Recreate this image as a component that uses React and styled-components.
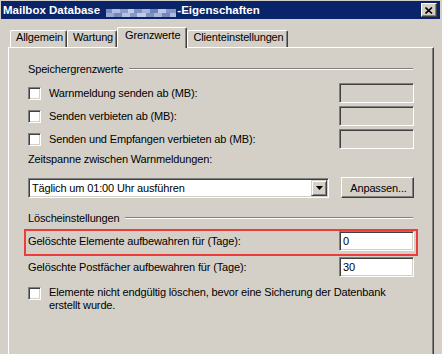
import React from "react";
import styled, { createGlobalStyle } from "styled-components";

const Global = createGlobalStyle`
  * { box-sizing: border-box; }
  html, body { margin: 0; padding: 0; background: #d4d0c8; }
  body {
    font-family: "Liberation Sans", Arial, sans-serif;
    font-size: 11px;
    letter-spacing: -0.15px;
    color: #000;
  }
`;

const Window = styled.div`
  width: 442px;
  height: 354px;
  overflow: hidden;
  background: #d4d0c8;
  padding-top: 1px;
  display: flex;
  flex-direction: column;
`;

const TitleBar = styled.div`
  height: 18px;
  margin: 0 2px 0 1px;
  padding: 0 3px 0 2px;
  background: #0a246a;
  display: flex;
  align-items: center;
  color: #fff;
  font-weight: bold;
  font-size: 11.5px;
  letter-spacing: 0;
  white-space: pre;
  flex-shrink: 0;
`;

const Blur = styled.span`
  align-self: flex-end;
  margin: 0 1px 2px 3px;
  width: 70px;
  height: 8px;
  background:
    linear-gradient(90deg, #7a8cc0 0 9%, #b2bcdc 9% 20%, #8e9ccb 20% 31%, #c3cbe4 31% 40%, #7f90c2 40% 52%, #a7b3d8 52% 63%, #6f83bb 63% 74%, #bdc6e2 74% 86%, #8394c5 86% 100%) top / 100% 50% no-repeat,
    linear-gradient(90deg, #9aa8d2 0 11%, #7587bd 11% 23%, #b7c1df 23% 34%, #8899c9 34% 45%, #c1c9e3 45% 57%, #7e8fc2 57% 69%, #a9b5d9 69% 80%, #7688be 80% 91%, #b0bbdc 91% 100%) bottom / 100% 50% no-repeat;
`;

const CloseButton = styled.div`
  margin-left: auto;
  width: 16px;
  height: 14px;
  background: #d4d0c8;
  border: 1px solid;
  border-color: #fff #404040 #404040 #fff;
  box-shadow: inset -1px -1px #808080;
  display: flex;
  align-items: center;
  justify-content: center;
`;

const TabStrip = styled.div`
  margin-top: 8px;
  height: 20px;
  padding-left: 10px;
  display: flex;
  align-items: flex-end;
  flex-shrink: 0;
  position: relative;
  z-index: 1;
`;

const Tab = styled.div`
  height: ${(p) => (p.$active ? "21px" : "17px")};
  margin-bottom: ${(p) => (p.$active ? "-1px" : "0")};
  padding: ${(p) => (p.$active ? "1px 6px 0 7px" : "0 3px 0 5px")};
  line-height: 13px;
  background: #d4d0c8;
  border-top: 1px solid #fff;
  border-left: 1px solid #fff;
  border-right: 1px solid #404040;
  border-radius: 2px 2px 0 0;
  box-shadow: inset -1px 0 #808080;
  white-space: nowrap;
`;

const Panel = styled.div`
  flex-shrink: 0;
  height: 330px;
  margin: 0 8px;
  padding: 15px 19px 0 19px;
  border-top: 1px solid #fff;
  border-left: 1px solid #fff;
  border-right: 1px solid #404040;
  box-shadow: inset -1px 0 #808080;
  display: flex;
  flex-direction: column;
`;

const GroupHeader = styled.div`
  margin-top: ${(p) => p.$mt || 0}px;
  height: 13px;
  line-height: 13px;
  display: flex;
  align-items: flex-start;
  white-space: nowrap;
`;

const EtchedLine = styled.div`
  flex: 1;
  margin: 5px 1px 0 6px;
  height: 2px;
  border-top: 1px solid #808080;
  border-bottom: 1px solid #fff;
`;

const RowList = styled.div`
  margin-top: ${(p) => p.$mt || 0}px;
  display: flex;
  flex-direction: column;
  gap: 3px;
`;

const FieldRow = styled.div`
  margin-top: ${(p) => p.$mt || 0}px;
  height: 20px;
  display: flex;
  align-items: center;
  line-height: 13px;
  white-space: nowrap;
`;

const Checkbox = styled.span`
  flex-shrink: 0;
  width: 13px;
  height: 13px;
  margin: ${(p) => (p.$top ? "1px 8px 0 0" : "0 8px 0 0")};
  background: #fff;
  border: 1px solid;
  border-color: #808080 #fff #fff #808080;
  box-shadow: inset 1px 1px #404040, inset -1px -1px #d4d0c8;
`;

const TextBox = styled.div`
  margin-left: auto;
  width: 75px;
  height: 20px;
  padding: 2px 0 0 3px;
  line-height: 14px;
  background: ${(p) => (p.$disabled ? "#d4d0c8" : "#fff")};
  border: 1px solid;
  border-color: #808080 #fff #fff #808080;
  box-shadow: inset 1px 1px #404040, inset -1px -1px #d4d0c8;
`;

const Label = styled.div`
  margin-top: ${(p) => p.$mt || 0}px;
  height: 13px;
  line-height: 13px;
`;

const ScheduleRow = styled.div`
  margin-top: ${(p) => p.$mt || 0}px;
  display: flex;
  align-items: flex-end;
`;

const Select = styled.div`
  width: 301px;
  height: 20px;
  background: #fff;
  border: 1px solid;
  border-color: #808080 #fff #fff #808080;
  box-shadow: inset 1px 1px #404040, inset -1px -1px #d4d0c8;
  padding: 1px 1px 1px 3px;
  display: flex;
  align-items: center;
`;

const SelectText = styled.span`
  flex: 1;
  line-height: 14px;
`;

const ArrowButton = styled.div`
  width: 16px;
  height: 16px;
  background: #d4d0c8;
  border: 1px solid;
  border-color: #d4d0c8 #404040 #404040 #d4d0c8;
  box-shadow: inset 1px 1px #fff, inset -1px -1px #808080;
  display: flex;
  align-items: center;
  justify-content: center;
`;

const Button = styled.div`
  margin-left: auto;
  width: 73px;
  height: 21px;
  background: #d4d0c8;
  border: 1px solid;
  border-color: #fff #404040 #404040 #fff;
  box-shadow: inset -1px -1px #808080;
  display: flex;
  align-items: center;
  justify-content: center;
  padding-left: 2px;
`;

const Highlight = styled.div`
  margin: ${(p) => p.$mt || 0}px -4px 0 -4px;
  border: 2px solid #ee3b3b;
  padding: 0 2px 3px 2px;
`;

const CheckRow = styled.div`
  margin-top: ${(p) => p.$mt || 0}px;
  display: flex;
  align-items: flex-start;
  line-height: 13px;
`;

const CheckText = styled.div`
  flex: 1;
  padding-right: 20px;
`;

const CloseIcon = () => (
  <svg width="8" height="7" viewBox="0 0 8 7">
    <path d="M0.5 0.5 L7 6.5 M7 0.5 L0.5 6.5" stroke="#000" strokeWidth="1.6" />
  </svg>
);

const ArrowIcon = () => (
  <svg width="7" height="4" viewBox="0 0 7 4">
    <path d="M0 0 H7 L3.5 4 Z" fill="#000" />
  </svg>
);

const limits = [
  "Warnmeldung senden ab (MB):",
  "Senden verbieten ab (MB):",
  "Senden und Empfangen verbieten ab (MB):",
];

export default function App() {
  return (
    <>
      <Global />
      <Window>
        <TitleBar>
          Mailbox Database <Blur />-Eigenschaften
          <CloseButton>
            <CloseIcon />
          </CloseButton>
        </TitleBar>
        <TabStrip>
          <Tab>Allgemein</Tab>
          <Tab>Wartung</Tab>
          <Tab $active>Grenzwerte</Tab>
          <Tab>Clienteinstellungen</Tab>
        </TabStrip>
        <Panel>
          <GroupHeader>
            Speichergrenzwerte
            <EtchedLine />
          </GroupHeader>
          <RowList $mt={7}>
            {limits.map((t) => (
              <FieldRow key={t}>
                <Checkbox />
                {t}
                <TextBox $disabled />
              </FieldRow>
            ))}
          </RowList>
          <Label $mt={4}>Zeitspanne zwischen Warnmeldungen:</Label>
          <ScheduleRow $mt={11}>
            <Select>
              <SelectText>Täglich um 01:00 Uhr ausführen</SelectText>
              <ArrowButton>
                <ArrowIcon />
              </ArrowButton>
            </Select>
            <Button>Anpassen...</Button>
          </ScheduleRow>
          <GroupHeader $mt={14}>
            Löscheinstellungen
            <EtchedLine />
          </GroupHeader>
          <Highlight $mt={4}>
            <FieldRow>
              Gelöschte Elemente aufbewahren für (Tage):
              <TextBox>0</TextBox>
            </FieldRow>
          </Highlight>
          <FieldRow $mt={1}>
            Gelöschte Postfächer aufbewahren für (Tage):
            <TextBox>30</TextBox>
          </FieldRow>
          <CheckRow $mt={9}>
            <Checkbox $top />
            <CheckText>
              Elemente nicht endgültig löschen, bevor eine Sicherung der Datenbank erstellt wurde.
            </CheckText>
          </CheckRow>
        </Panel>
      </Window>
    </>
  );
}
